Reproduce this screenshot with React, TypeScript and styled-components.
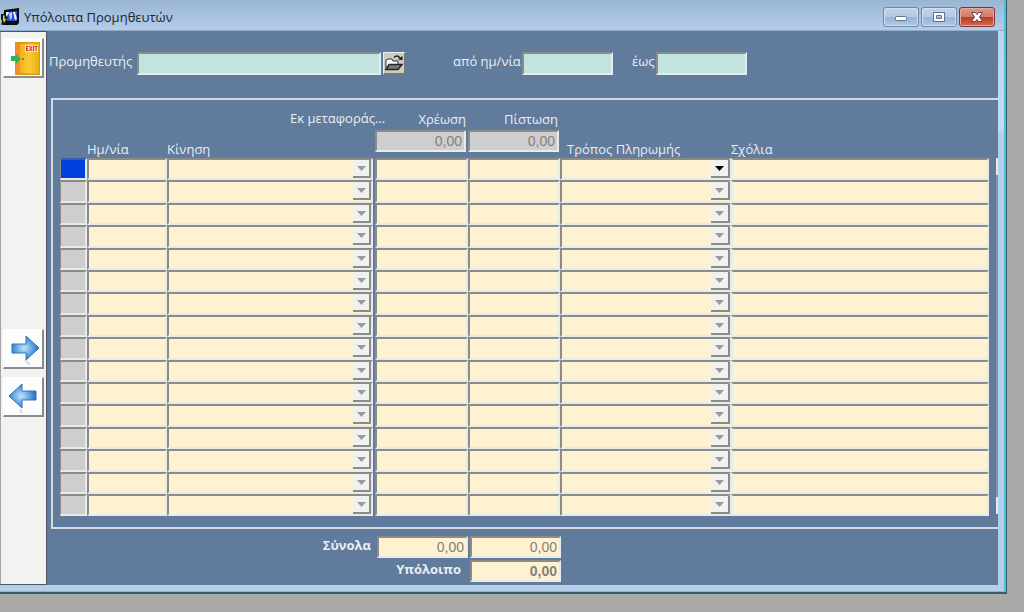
import React from 'react';
import styled, { createGlobalStyle, css } from 'styled-components';

const GlobalStyle = createGlobalStyle`
  *, *::before, *::after { box-sizing: border-box; }
  body {
    margin: 0;
    background: #a9a9a7;
    font-family: 'Open Sans', 'Noto Sans', sans-serif;
    font-size: 13px;
    line-height: 18px;
    color: #e9eef5;
  }
  input, select, button { font: inherit; margin: 0; border-radius: 0; }
`;

const Page = styled.div`
  min-height: 100vh;
  padding-right: 17px;
`;

const Window = styled.main`
  border-right: 1px solid #3b5a60;
  border-bottom: 2px solid #35606a;
  background: #a9a9a7;
`;

const Frame = styled.div`
  border-right: 2px solid #45c3de;
  border-bottom: 1px solid #59cbe0;
  background: linear-gradient(#bcd3ec 0, #c5daf3 130px, #b5cfea 132px);
`;

const TitleBar = styled.header`
  display: flex;
  align-items: center;
  gap: 4px;
  height: 31px;
  padding: 4px 9px 0 1px;
  background: linear-gradient(#9ab5d1, #a9c3e0 60%, #b4cde8);
  border-bottom: 1px solid #8fa9c6;
`;

const Title = styled.h1`
  flex: 1;
  margin: 0;
  font-size: 13px;
  font-weight: 400;
  line-height: 18px;
  color: #1d2530;
`;

const WindowButtons = styled.div`
  display: flex;
  gap: 2px;
`;

const WindowButton = styled.button<{ $close?: boolean }>`
  display: flex;
  align-items: center;
  justify-content: center;
  width: 36px;
  height: 20px;
  padding: 0;
  border: 1px solid ${p => (p.$close ? '#7b3440' : '#7088a8')};
  border-radius: 3px;
  box-shadow: inset 0 0 0 1px ${p => (p.$close ? '#e8a99b' : '#cfe0f2')};
  background: ${p =>
    p.$close
      ? 'linear-gradient(#dd9a88 0, #d27c68 48%, #ba3a22 50%, #cf6a4c 100%)'
      : 'linear-gradient(#c0d4ea 0, #b2cae4 48%, #98b4d4 50%, #aec8e4 100%)'};
`;

const Body = styled.div`
  display: flex;
  margin: 0 6px 6px 0;
  background: #617b9c;
`;

const Sidebar = styled.nav`
  display: flex;
  flex-direction: column;
  flex: none;
  gap: 8px;
  width: 47px;
  padding: 6px 0 0 3px;
  background: #f2f2f1;
  border: solid #4c5565;
  border-width: 1px 1px 1px 0;
  box-shadow: inset 1px 0 #a5a5a5;
`;

const ToolButton = styled.button<{ $spaced?: boolean }>`
  display: flex;
  align-items: center;
  justify-content: center;
  width: 41px;
  height: 40px;
  padding: 0;
  margin-top: ${p => (p.$spaced ? '243px' : '0')};
  background: #fdfdfd;
  border: solid;
  border-width: 1px 2px 2px 1px;
  border-color: #fff #8b8b8b #8b8b8b #fff;
`;

const Content = styled.div`
  flex: 1;
  min-width: 0;
`;

const Filters = styled.form`
  display: flex;
  height: 67px;
  padding: 21px 0 0 2px;
`;

const FilterLabel = styled.label<{ $width: number }>`
  width: ${p => p.$width}px;
  white-space: nowrap;
`;

const FilterGroup = styled.div<{ $indent?: number }>`
  display: flex;
  align-items: flex-start;
  margin-left: ${p => p.$indent ?? 0}px;
`;

const sunken = css`
  border: 2px solid;
  border-color: #8b8b88 #e8ebec #e8ebec #8b8b88;
  outline: none;
`;

const FilterInput = styled.input<{ $width: number }>`
  ${sunken}
  width: ${p => p.$width}px;
  height: 23px;
  padding: 0 3px;
  background: #c1e4e1;
  color: #222;
`;

const LookupButton = styled.button`
  width: 23px;
  height: 23px;
  margin-left: 2px;
  padding: 0;
  display: flex;
  align-items: center;
  justify-content: center;
  background: #cbcbc8;
  border: solid;
  border-width: 1px 2px 2px 1px;
  border-color: #eee #777 #777 #eee;
`;

const Panel = styled.section`
  display: flex;
  justify-content: space-between;
  gap: 7px;
  margin-left: 4px;
  padding: 0 0 11px 7px;
  border: solid #d3dae2;
  border-width: 2px 0 2px 2px;
`;

const Grid = styled.table`
  flex: 1;
  min-width: 0;
  width: 100%;
  table-layout: fixed;
  border-collapse: collapse;

  td, th { padding: 0; }
`;

const HeadCell = styled.th<{ $indent?: number }>`
  height: 58px;
  vertical-align: bottom;
  text-align: left;
  font-weight: 400;
  white-space: nowrap;
  text-indent: ${p => p.$indent ?? 0}px;
`;

const CarryCell = styled(HeadCell)`
  vertical-align: top;
  text-align: right;
`;

const CarryLabel = styled.div`
  padding: 10px 2px 1px 0;
  height: 30px;
`;

const MovementHead = styled.div`
  display: flex;
  flex-direction: column;
  justify-content: space-between;
  height: 58px;
  padding-top: 9px;
`;

const CarryNote = styled.span`
  margin-left: 123px;
`;

const Amount = styled.input<{ $muted?: boolean; $bold?: boolean }>`
  ${sunken}
  display: block;
  width: 91px;
  height: 22px;
  padding: 0 2px;
  text-align: right;
  font-family: 'Liberation Sans', Arial, sans-serif;
  font-size: 14px;
  font-weight: ${p => (p.$bold ? 700 : 400)};
  color: #85817a;
  background: ${p => (p.$muted ? '#cecece' : '#fef2d0')};
`;

/* Every five rows share 112px, so two of them are a pixel taller. */
const Row = styled.tr`
  --row: 22px;
  height: var(--row);
  &:nth-child(5n + 2), &:nth-child(5n + 4) { --row: 23px; }
`;

const cellBox = css`
  ${sunken}
  display: block;
  width: 100%;
  height: var(--row);
  padding: 0 3px;
  background: #fef2d0;
  color: #333;
`;

const CellInput = styled.input<{ $open?: boolean }>`
  ${cellBox}
  border-left-color: ${p => (p.$open ? '#e8ebec' : '#8b8b88')};
`;

const Marker = styled.button<{ $current: boolean }>`
  ${cellBox}
  border-left-width: 1px;
  background: ${p => (p.$current ? '#0040e0' : '#cecece')};
  border-top-color: ${p => (p.$current ? '#3a5cae' : '#8b8b88')};
`;

const Combo = styled.div<{ $gap?: boolean }>`
  display: grid;
  grid-template-columns: 1fr 20px;
  height: var(--row);
  margin-right: ${p => (p.$gap ? 2 : 0)}px;
`;

const ComboSelect = styled.select`
  ${cellBox}
  appearance: none;
  grid-area: 1 / 1 / 2 / 3;
`;

const ComboArrow = styled.span<{ $active: boolean; $gap?: boolean }>`
  grid-area: 1 / 2 / 2 / 3;
  display: flex;
  align-items: center;
  justify-content: center;
  height: 18px;
  margin: 2px ${p => (p.$gap ? 2 : 1)}px 0 0;
  pointer-events: none;
  background: #f1f1f0;
  border: solid #8b8b88;
  border-width: 0 2px 2px 0;
  color: ${p => (p.$active ? '#000' : '#999')};
`;

const ScrollTrack = styled.div`
  width: 2px;
  height: 356px;
  margin-top: 58px;
  border: solid #e4e9ec;
  border-width: 17px 0;
  background: #7d91ab;
`;

const Totals = styled.footer`
  display: grid;
  grid-template-columns: 323px 91px 91px;
  column-gap: 2px;
  row-gap: 2px;
  padding: 7px 0 3px 5px;
  font-weight: 700;
`;

const TotalLabel = styled.label<{ $span?: boolean }>`
  grid-column: span ${p => (p.$span ? 2 : 1)};
  text-align: right;
  padding-right: ${p => (p.$span ? 7 : 4)}px;
`;

const AppIcon = () => (
  <svg width="19" height="18" viewBox="0 0 19 18" aria-hidden="true">
    <path d="M3 2 L18 0 V15 L16 17 H2 Z" fill="#0c0c14" />
    <path d="M5 4l11-1v10H5z" fill="#2a50d8" />
    <path d="M5 4h3l-1 3-2 1z" fill="#e7eefc" />
    <path d="M12 4l2 0 2 7-2 1z" fill="#f4f6ff" />
    <path d="M8 5l3-1 0 6-2 2z" fill="#b8d4fa" />
    <path d="M0 6l4 0 1 2 2 2-2 1 1 2-2 3-4 1 1-4-1-2z" fill="#17170c" />
    <path d="M2 7l2 1-1 2 2 1-2 4-1-3z" fill="#dcd83c" />
  </svg>
);

const ExitIcon = () => (
  <svg width="36" height="36" viewBox="0 0 36 36" aria-hidden="true">
    <defs>
      <linearGradient id="door" x1="0" x2="1">
        <stop offset="0" stopColor="#f0b41c" />
        <stop offset=".5" stopColor="#f8cb32" />
        <stop offset="1" stopColor="#e8b010" />
      </linearGradient>
    </defs>
    <path d="M10 2h25v33H10z" fill="#d49a13" />
    <path d="M11 3h4v31h-4z" fill="#f58b35" />
    <path d="M15 4l19-1v31l-19-1z" fill="url(#door)" />
    <rect x="20" y="5" width="13" height="7" fill="#f8d8bc" />
    <path d="M21 6.500h2.500M21 8.500h2M21 10.500h2.500M21.500 6v5M24.500 6l2.500 5M27 6l-2.500 5M28.500 6v5M29.500 6.500h3M31 6v5" stroke="#d8322c" fill="none" />
    <circle cx="18" cy="19" r="1" fill="#8f5d12" />
    <path d="M6 16h5v-2l5 5-5 5v-3H6z" fill="#35b34c" />
  </svg>
);

const ArrowIcon = ({ left }: { left?: boolean }) => (
  <svg width="36" height="36" viewBox="0 0 36 36" aria-hidden="true">
    <defs>
      <radialGradient id={left ? 'blueL' : 'blueR'} cx=".45" cy=".5" r=".6">
        <stop offset="0" stopColor="#c2e2f9" />
        <stop offset=".5" stopColor="#62a7e2" />
        <stop offset="1" stopColor="#1c62b4" />
      </radialGradient>
    </defs>
    <path
      d={left ? 'M4 17L17 5v7h14v9H17v8z' : 'M34 17L21 5v8H7v9h14v7z'}
      fill={`url(#${left ? 'blueL' : 'blueR'})`}
      stroke="#3474bd"
    />
    <path d={left ? 'M15 30l2 4' : 'M20 29l5 5'} stroke="#d6d9dc" strokeWidth="2" />
  </svg>
);

const FolderIcon = () => (
  <svg width="20" height="18" viewBox="0 0 20 18" aria-hidden="true">
    <path d="M2 15V6l2-1h4l1 2h5v3" fill="#fff" stroke="#333" />
    <path d="M2 15.500l3-5h13l-4 5z" fill="#777b76" stroke="#252525" strokeWidth="1.5" />
    <path d="M10 3.500c2-2 4-2 6 .5" fill="none" stroke="#252525" strokeWidth="1.5" />
    <path d="M14 5.500l4.500.5V2z" fill="#151515" />
  </svg>
);

const MinimizeIcon = () => (
  <svg width="14" height="12" viewBox="0 0 14 12" aria-hidden="true">
    <rect x="1.5" y="5.5" width="11" height="4" rx="1" fill="#fff" stroke="#63738a" />
  </svg>
);

const MaximizeIcon = () => (
  <svg width="14" height="12" viewBox="0 0 14 12" aria-hidden="true">
    <path d="M1.5 1.500h11v9h-11z M4.500 4.500v3h5v-3z" fill="#fff" fillRule="evenodd" stroke="#63738a" />
  </svg>
);

const CloseIcon = () => (
  <svg width="14" height="12" viewBox="0 0 14 12" aria-hidden="true">
    <path d="M1.500 1.500h4L7 3.500l1.500-2h4L9.500 6l3 4.500h-4L7 8.500l-1.500 2h-4L4.500 6z" fill="#fff" stroke="#6c4550" />
  </svg>
);

const Triangle = () => (
  <svg width="9" height="5" viewBox="0 0 9 5" aria-hidden="true">
    <path d="M0 0h9L4.500 5z" fill="currentColor" />
  </svg>
);

interface ComboBoxProps {
  label: string;
  active?: boolean;
  gap?: boolean;
}

const ComboBox = ({ label, active = false, gap }: ComboBoxProps) => (
  <Combo $gap={gap}>
    <ComboSelect aria-label={label} />
    <ComboArrow $active={active} $gap={gap}>
      <Triangle />
    </ComboArrow>
  </Combo>
);

const rows = Array.from({ length: 16 }, (_, i) => i + 1);

export default function App() {
  return (
    <Page>
      <GlobalStyle />
      <Window>
        <Frame>
          <TitleBar>
            <AppIcon />
            <Title>Υπόλοιπα Προμηθευτών</Title>
            <WindowButtons>
              <WindowButton aria-label="Ελαχιστοποίηση"><MinimizeIcon /></WindowButton>
              <WindowButton aria-label="Μεγιστοποίηση"><MaximizeIcon /></WindowButton>
              <WindowButton $close aria-label="Κλείσιμο"><CloseIcon /></WindowButton>
            </WindowButtons>
          </TitleBar>
          <Body>
            <Sidebar>
              <ToolButton aria-label="Έξοδος"><ExitIcon /></ToolButton>
              <ToolButton $spaced aria-label="Επόμενο"><ArrowIcon /></ToolButton>
              <ToolButton aria-label="Προηγούμενο"><ArrowIcon left /></ToolButton>
            </Sidebar>
            <Content>
              <Filters>
                <FilterGroup>
                  <FilterLabel $width={88} htmlFor="supplier">Προμηθευτής</FilterLabel>
                  <FilterInput $width={244} id="supplier" />
                  <LookupButton type="button" aria-label="Αναζήτηση"><FolderIcon /></LookupButton>
                </FilterGroup>
                <FilterGroup $indent={47}>
                  <FilterLabel $width={69} htmlFor="from">από ημ/νία</FilterLabel>
                  <FilterInput $width={91} id="from" />
                </FilterGroup>
                <FilterGroup $indent={19}>
                  <FilterLabel $width={24} htmlFor="to">έως</FilterLabel>
                  <FilterInput $width={91} id="to" />
                </FilterGroup>
              </Filters>
              <Panel>
                <Grid>
                  <colgroup>
                    <col width="27" />
                    <col width="80" />
                    <col width="208" />
                    <col width="93" />
                    <col width="92" />
                    <col width="171" />
                    <col />
                  </colgroup>
                  <thead>
                    <tr>
                      <HeadCell />
                      <HeadCell scope="col">Ημ/νία</HeadCell>
                      <HeadCell scope="col">
                        <MovementHead>
                          <CarryNote>Εκ μεταφοράς...</CarryNote>
                          <span>Κίνηση</span>
                        </MovementHead>
                      </HeadCell>
                      <CarryCell scope="col">
                        <CarryLabel>Χρέωση</CarryLabel>
                        <Amount $muted readOnly value="0,00" aria-label="Χρέωση εκ μεταφοράς" />
                      </CarryCell>
                      <CarryCell scope="col">
                        <CarryLabel>Πίστωση</CarryLabel>
                        <Amount $muted readOnly value="0,00" aria-label="Πίστωση εκ μεταφοράς" />
                      </CarryCell>
                      <HeadCell scope="col" $indent={7}>Τρόπος Πληρωμής</HeadCell>
                      <HeadCell scope="col">Σχόλια</HeadCell>
                    </tr>
                  </thead>
                  <tbody>
                    {rows.map(n => (
                      <Row key={n}>
                        <td><Marker $current={n === 1} aria-label={`Γραμμή ${n}`} /></td>
                        <td><CellInput aria-label="Ημ/νία" /></td>
                        <td><ComboBox label="Κίνηση" gap /></td>
                        <td><CellInput aria-label="Χρέωση" /></td>
                        <td><CellInput aria-label="Πίστωση" /></td>
                        <td><ComboBox label="Τρόπος Πληρωμής" active={n === 1} /></td>
                        <td><CellInput $open aria-label="Σχόλια" /></td>
                      </Row>
                    ))}
                  </tbody>
                </Grid>
                <ScrollTrack />
              </Panel>
              <Totals>
                <TotalLabel htmlFor="total-debit">Σύνολα</TotalLabel>
                <Amount id="total-debit" readOnly value="0,00" />
                <Amount aria-label="Σύνολο πίστωσης" readOnly value="0,00" />
                <TotalLabel $span htmlFor="balance">Υπόλοιπο</TotalLabel>
                <Amount $bold id="balance" readOnly value="0,00" />
              </Totals>
            </Content>
          </Body>
        </Frame>
      </Window>
    </Page>
  );
}
